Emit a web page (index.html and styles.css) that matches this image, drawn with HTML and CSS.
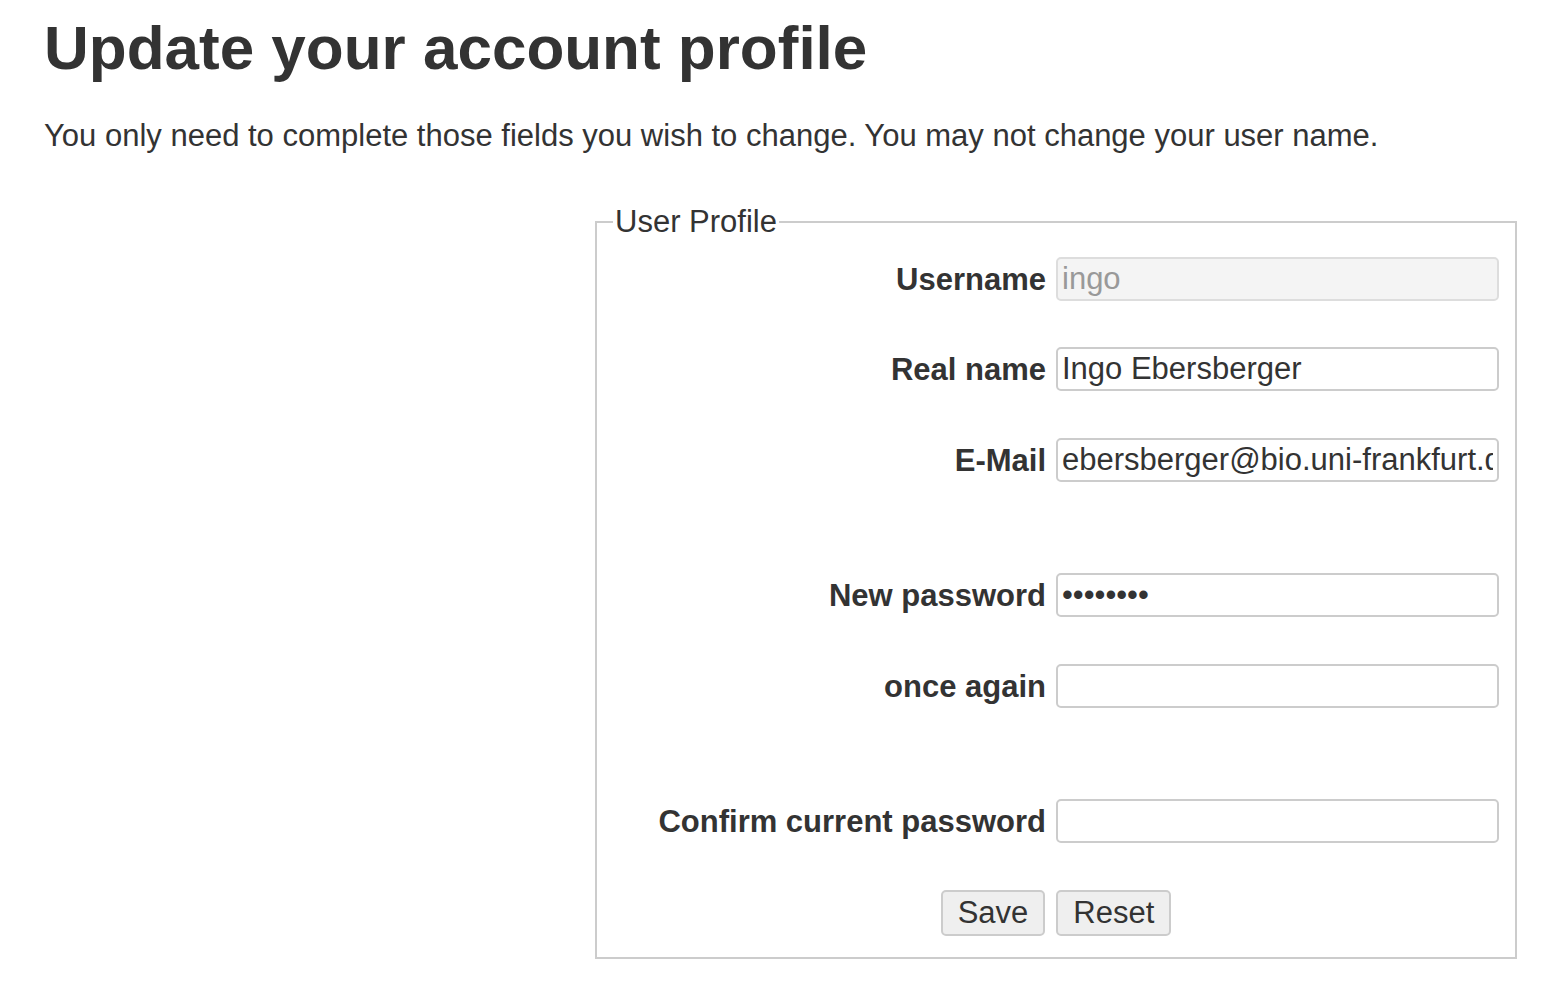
FILE: index.html
```html
<!DOCTYPE html>
<html lang="en">
<head>
<meta charset="utf-8">
<title>Update your account profile</title>
<link rel="stylesheet" href="styles.css">
</head>
<body>
<div class="page">
  <h1 class="title">Update your account profile</h1>
  <p class="intro">You only need to complete those fields you wish to change. You may not change your user name.</p>
  <form class="profile-form" onsubmit="return false;">
    <fieldset class="profile-set">
      <legend class="profile-legend">User Profile</legend>
      <div class="row">
        <label class="row-label" for="login">Username</label>
        <input class="field" id="login" type="text" value="ingo" disabled>
      </div>
      <div class="row">
        <label class="row-label" for="fullname">Real name</label>
        <input class="field" id="fullname" type="text" value="Ingo Ebersberger">
      </div>
      <div class="row">
        <label class="row-label" for="email">E-Mail</label>
        <input class="field" id="email" type="text" value="ebersberger@bio.uni-frankfurt.de">
      </div>
      <div class="spacer"></div>
      <div class="row">
        <label class="row-label" for="newpass">New password</label>
        <input class="field" id="newpass" type="password" value="12345678">
      </div>
      <div class="row">
        <label class="row-label" for="passchk">once again</label>
        <input class="field" id="passchk" type="password">
      </div>
      <div class="spacer"></div>
      <div class="row">
        <label class="row-label" for="oldpass">Confirm current password</label>
        <input class="field" id="oldpass" type="password">
      </div>
      <div class="buttons">
        <button class="btn" type="submit">Save</button>
        <button class="btn" type="reset">Reset</button>
      </div>
    </fieldset>
  </form>
</div>
</body>
</html>
```

FILE: styles.css
```css
html, body {
  margin: 0;
  padding: 0;
  background: #fff;
}

body {
  font-family: "Liberation Sans", Arial, sans-serif;
  font-size: 31px;
  color: #333;
}

.page {
  padding: 0 43px 0 44px;
}

.title {
  font-size: 62px;
  font-weight: bold;
  line-height: 1.2;
  margin: 11px 0 0 0;
}

.intro {
  font-size: 31px;
  line-height: 1.4;
  margin: 29px 0 0 0;
}

.profile-form {
  margin: 46px 0 0 0;
}

.profile-set {
  box-sizing: border-box;
  width: 922px;
  margin: 0 0 0 auto;
  border: 2px solid #ccc;
  padding: 17px 16px 21px 16px;
}

.profile-legend {
  font-size: 31px;
  line-height: normal;
  padding: 0 2px;
  color: #333;
}

.row {
  display: flex;
  align-items: center;
  justify-content: flex-end;
  gap: 10px;
  height: 44px;
  margin-bottom: 46.5px;
}

.row-label {
  flex: 1;
  text-align: right;
  font-weight: bold;
  white-space: nowrap;
  padding-top: 2px;
}

.field {
  box-sizing: border-box;
  width: 443px;
  height: 44px;
  margin: 0;
  padding: 0 4px;
  border: 2px solid #ccc;
  border-radius: 5px;
  background: #fff;
  color: #333;
  font-family: "Liberation Sans", Arial, sans-serif;
  font-size: 31px;
  outline: none;
}

.field:disabled {
  background: #f4f4f4;
  color: #999;
  border-color: #ddd;
}

.spacer {
  height: 45px;
}

.buttons {
  display: flex;
  justify-content: center;
  gap: 11px;
}

.btn {
  box-sizing: border-box;
  height: 46px;
  margin: 0;
  padding: 0 15px;
  border: 2px solid #ccc;
  border-radius: 5px;
  background: #efefef;
  color: #333;
  font-family: "Liberation Sans", Arial, sans-serif;
  font-size: 31px;
}
```
